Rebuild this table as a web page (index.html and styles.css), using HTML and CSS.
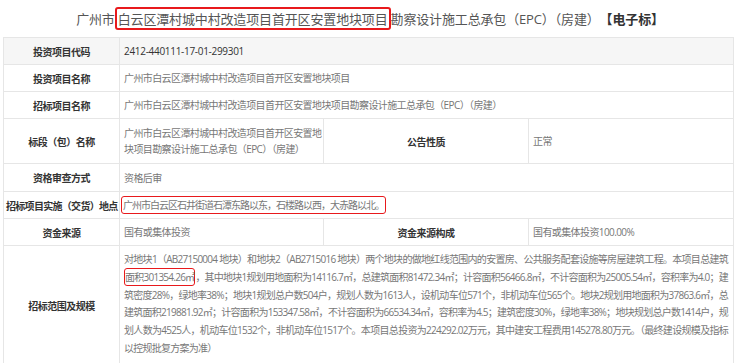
FILE: index.html
```html
<!DOCTYPE html>
<html lang="zh-CN">
<head>
<meta charset="utf-8">
<title>招标公告</title>
<link rel="stylesheet" href="styles.css">
</head>
<body>
<div class="page">
  <h1 class="title">广州市<span class="mark">白云区潭村城中村改造项目首开区安置地块项目</span>勘察设计施工总承包（EPC）（房建）<b class="tag">【电子标】</b></h1>
  <table class="info">
    <colgroup>
      <col class="c1"><col class="c2"><col class="c3"><col class="c4">
    </colgroup>
    <tr class="r-head">
      <th>投资项目代码</th>
      <td colspan="3" class="code">2412-440111-17-01-299301</td>
    </tr>
    <tr>
      <th>投资项目名称</th>
      <td colspan="3">广州市白云区潭村城中村改造项目首开区安置地块项目</td>
    </tr>
    <tr>
      <th>招标项目名称</th>
      <td colspan="3">广州市白云区潭村城中村改造项目首开区安置地块项目勘察设计施工总承包（EPC）（房建）</td>
    </tr>
    <tr class="r-two">
      <th>标段（包）名称</th>
      <td class="twoline">广州市白云区潭村城中村改造项目首开区安置地<br>块项目勘察设计施工总承包（EPC）（房建）</td>
      <th>公告性质</th>
      <td>正常</td>
    </tr>
    <tr class="r-tall">
      <th>资格审查方式</th>
      <td colspan="3">资格后审</td>
    </tr>
    <tr>
      <th class="wide">招标项目实施（交货）地点</th>
      <td colspan="3" class="addr"><span class="mark mark-sm mark-addr">广州市白云区石井街道石潭东路以东，石楼路以西，大赤路以北。</span></td>
    </tr>
    <tr>
      <th>资金来源</th>
      <td>国有或集体投资</td>
      <th>资金来源构成</th>
      <td>国有或集体投资100.00%</td>
    </tr>
    <tr class="r-long">
      <th>招标范围及规模</th>
      <td colspan="3" class="long">
        <span class="ln">对地块1（AB27150004 地块）和地块2（AB2715016 地块）两个地块的做地红线范围内的安置房、公共服务配套设施等房屋建筑工程。本项目总建筑</span>
        <span class="ln"><span class="mark mark-sm">面积301354.26㎡</span>，其中地块1规划用地面积为14116.7㎡，总建筑面积81472.34㎡；计容面积56466.8㎡，不计容面积为25005.54㎡，容积率为4.0；建</span>
        <span class="ln">筑密度28%，绿地率38%；地块1规划总户数504户，规划人数为1613人，设机动车位571个，非机动车位565个。地块2规划用地面积为37863.6㎡，总</span>
        <span class="ln">建筑面积219881.92㎡；计容面积为153347.58㎡，不计容面积为66534.34㎡，容积率为4.5；建筑密度30%，绿地率38%；地块规划总户数1414户，规</span>
        <span class="ln">划人数为4525人，机动车位1532个，非机动车位1517个。本项目总投资为224292.02万元，其中建安工程费用145278.80万元。（最终建设规模及指标</span>
        <span class="ln last">以控规批复方案为准）</span>
      </td>
    </tr>
  </table>
</div>
</body>
</html>
```

FILE: styles.css
```css
html, body {
  margin: 0;
  padding: 0;
  background: #ffffff;
}

.page {
  width: 740px;
  font-family: "Open Sans", "Noto Sans CJK SC", sans-serif;
}

.title {
  margin: 0;
  height: 37px;
  display: flex;
  align-items: center;
  justify-content: center;
  font-size: 13px;
  font-weight: normal;
  color: #555555;
  white-space: nowrap;
  letter-spacing: -0.15px;
}

.title .tag {
  color: #333333;
  font-weight: bold;
}

.mark {
  border: 2px solid #e8191c;
  border-radius: 3px;
  padding: 0 1px;
}

.mark-sm {
  border-width: 1.5px;
  padding: 1px 0;
}

.mark-addr {
  margin-left: -3px;
  padding: 1px 1px;
}

.info {
  margin-left: 3px;
  width: 730px;
  border-collapse: collapse;
  table-layout: fixed;
  font-size: 10px;
}

.c1 { width: 116px; }
.c2 { width: 204px; }
.c3 { width: 205px; }
.c4 { width: 205px; }

.info th,
.info td {
  border: 1px solid #e6e6e6;
  height: 26px;
  padding: 0 4px;
  vertical-align: middle;
}

.info th {
  color: #333333;
  font-weight: bold;
  text-align: center;
  letter-spacing: -0.5px;
}

.info th.wide {
  padding: 0 2px;
  white-space: nowrap;
  letter-spacing: -0.7px;
}

.info td {
  color: #777777;
  text-align: left;
  line-height: 16px;
  letter-spacing: -0.6px;
}

.info td.addr {
  letter-spacing: -1px;
}

.r-head th,
.r-head td {
  background: #f6f6f6;
}

.info td.code {
  color: #333333;
  letter-spacing: -0.3px;
}

.info td.twoline {
  white-space: nowrap;
  padding-right: 0;
}

.r-two td,
.r-two th {
  height: 44px;
}

.r-tall th,
.r-tall td {
  height: 27px;
}

.info td.long {
  line-height: 17.8px;
  padding: 5px 5px 8px 4px;
  letter-spacing: -0.75px;
}

.ln {
  display: block;
  white-space: nowrap;
  text-align: justify;
  text-align-last: justify;
}

.ln.last {
  text-align-last: left;
}
```
